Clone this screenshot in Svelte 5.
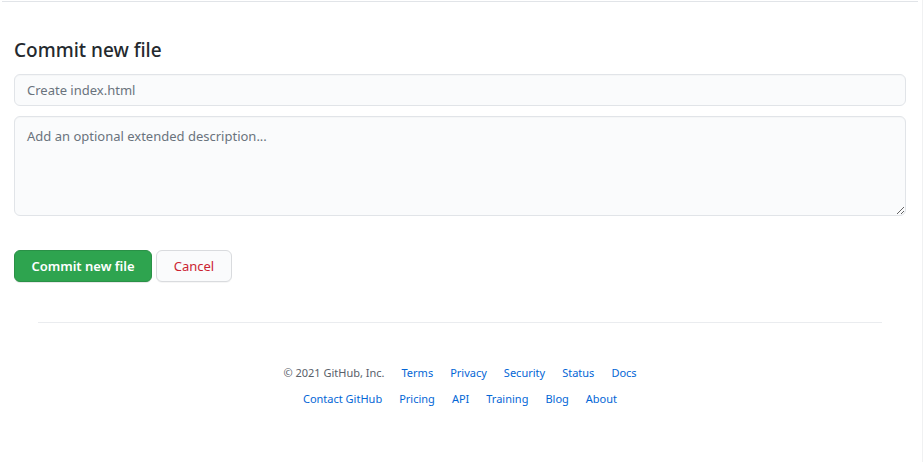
<script>
  const rows = [
    ['Terms', 'Privacy', 'Security', 'Status', 'Docs'],
    ['Contact GitHub', 'Pricing', 'API', 'Training', 'Blog', 'About'],
  ];
  let summary = $state('');
  let description = $state('');
</script>

<div class="page">
  <div class="rule"></div>
  <main>
    <form onsubmit={(e) => e.preventDefault()}>
      <h1>Commit new file</h1>
      <input type="text" aria-label="Commit summary" placeholder="Create index.html" bind:value={summary} />
      <textarea aria-label="Commit description" placeholder="Add an optional extended description..." bind:value={description}></textarea>
      <div class="actions">
        <button class="primary" type="submit">Commit new file</button>
        <button class="danger" type="button">Cancel</button>
      </div>
    </form>
    <footer>
      {#each rows as row, i}
        <ul>
          {#if i === 0}<li>© 2021 GitHub, Inc.</li>{/if}
          {#each row as label}
            <li><a href="#top">{label}</a></li>
          {/each}
        </ul>
      {/each}
    </footer>
  </main>
</div>

<style>
  :global(body) {
    background: #fff;
  }
  .page {
    box-sizing: border-box;
    min-height: 100vh;
    padding-top: 1px;
    border-right: 1px solid #f0f1f2;
    font-family: 'Segoe UI', 'Noto Sans', 'Open Sans', sans-serif;
    font-size: 14px;
    color: #24292e;
  }
  .rule {
    height: 1px;
    margin: 0 4px 0 2px;
    background: #e1e4e8;
  }
  main {
    padding: 33px 16px 0 14px;
  }
  form {
    display: flex;
    flex-direction: column;
  }
  h1 {
    margin: 0 0 9px;
    font-size: 19px;
    line-height: 30px;
    font-weight: 500;
  }
  input,
  textarea {
    box-sizing: border-box;
    width: 100%;
    margin: 0 0 10px;
    padding: 5px 12px;
    border: 1px solid #e1e4e8;
    border-radius: 6px;
    background: #fafbfc;
    box-shadow: inset 0 1px 0 rgba(225, 228, 232, 0.2);
    font-family: inherit;
    font-size: 13px;
    line-height: 20px;
    color: #24292e;
  }
  input {
    height: 32px;
  }
  textarea {
    display: block;
    height: 100px;
    padding: 9px 12px;
    resize: vertical;
  }
  input::placeholder,
  textarea::placeholder {
    color: #6a737d;
    opacity: 1;
  }
  .actions {
    display: flex;
    gap: 4px;
    margin-top: 24px;
  }
  button {
    box-sizing: border-box;
    min-width: 76px;
    padding: 5px 16px;
    border: 1px solid #d9dbde;
    border-radius: 6px;
    font-family: inherit;
    font-size: 13px;
    line-height: 20px;
    cursor: pointer;
  }
  .primary {
    min-width: 138px;
    border-color: #2a9147;
    background: #2ea44f;
    box-shadow: 0 1px 0 rgba(27, 31, 35, 0.1);
    font-weight: 600;
    color: #fff;
  }
  .danger {
    background: #fafbfc;
    box-shadow: 0 1px 0 rgba(27, 31, 35, 0.04);
    font-weight: 400;
    color: #cb2431;
  }
  footer {
    display: flex;
    flex-direction: column;
    gap: 8px;
    margin: 40px 24px 0;
    padding-top: 41px;
    border-top: 1px solid #eaecef;
    font-size: 11px;
    line-height: 18px;
    color: #586069;
  }
  ul {
    display: flex;
    flex-wrap: wrap;
    justify-content: center;
    gap: 0 17px;
    margin: 0;
    padding: 0;
    list-style: none;
  }
  a {
    color: #0366d6;
    text-decoration: none;
  }
  a:hover {
    text-decoration: underline;
  }
</style>
